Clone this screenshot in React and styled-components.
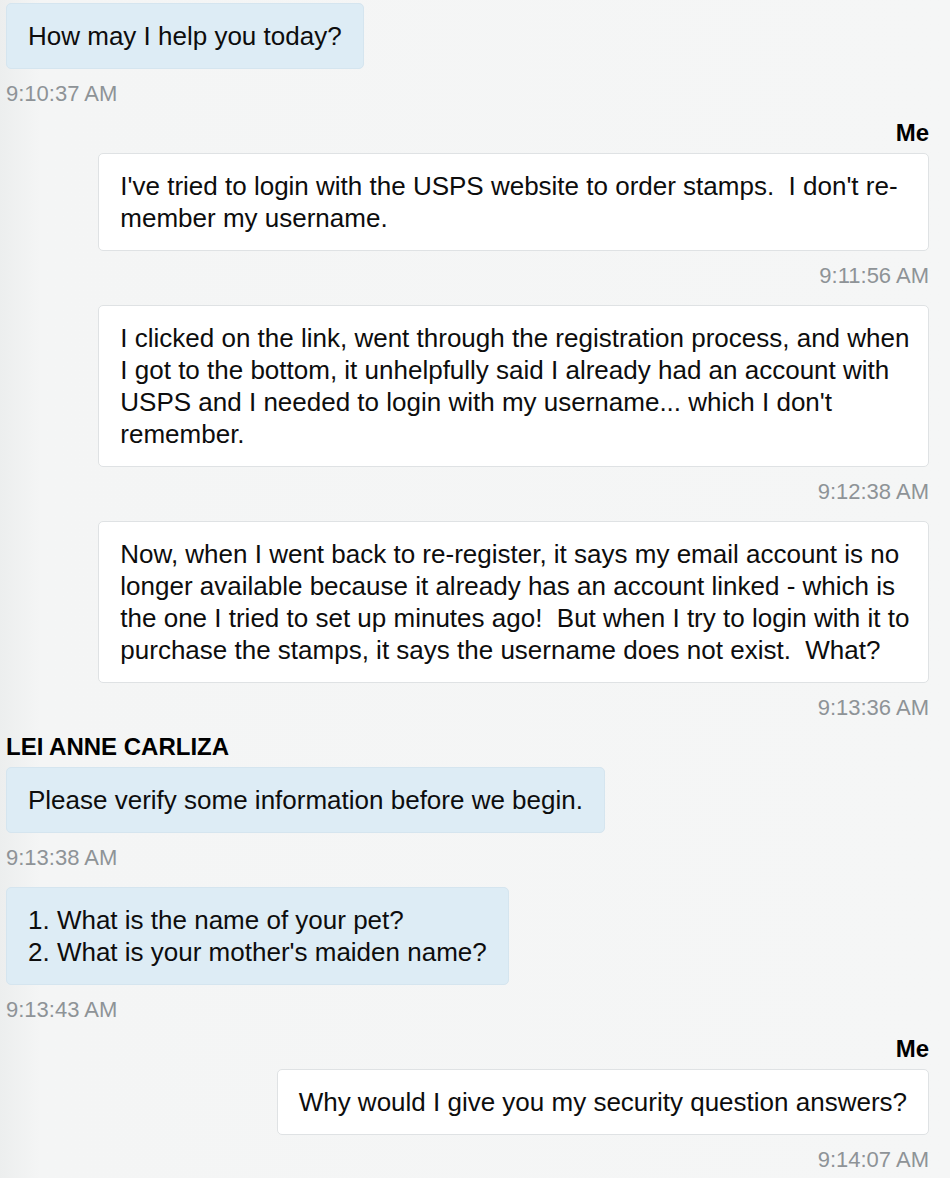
import styled, { createGlobalStyle } from "styled-components";

const GlobalStyle = createGlobalStyle`
  html, body {
    margin: 0;
    padding: 0;
  }
  body {
    background: linear-gradient(to right, #eceeee 0, #f4f5f5 40px, #f5f6f6 100%);
    font-family: "Liberation Sans", Arial, Helvetica, sans-serif;
    color: #111;
  }
`;

const Transcript = styled.div`
  display: flex;
  flex-direction: column;
  gap: 15px;
  padding: 3px 21px 20px 6px;
`;

const Group = styled.section`
  display: flex;
  flex-direction: column;
  align-items: ${(p) => (p.$mine ? "flex-end" : "flex-start")};
`;

const Name = styled.h3`
  margin: 0 0 8px;
  font-size: 24px;
  line-height: 24px;
  font-weight: 700;
  color: #000;
`;

const Messages = styled.div`
  display: flex;
  flex-direction: column;
  gap: 17px;
  width: 100%;
  align-items: ${(p) => (p.$mine ? "flex-end" : "flex-start")};
`;

const Message = styled.div`
  display: flex;
  flex-direction: column;
  align-items: ${(p) => (p.$mine ? "flex-end" : "flex-start")};
  width: 100%;
`;

const Bubble = styled.div`
  box-sizing: border-box;
  width: ${(p) => (p.$full ? "90%" : "auto")};
  padding: 16px 21px;
  border-radius: 5px;
  border: 1px solid ${(p) => (p.$mine ? "#dfe2e4" : "#d5e5ef")};
  background: ${(p) => (p.$mine ? "#ffffff" : "#ddecf5")};
  font-size: 26px;
  line-height: 32px;
  color: #0d0d0d;
  white-space: pre;
`;

const Time = styled.div`
  margin-top: 13px;
  font-size: 22px;
  line-height: 24px;
  color: #8e9397;
`;

const transcript = [
  {
    name: null,
    mine: false,
    messages: [{ text: "How may I help you today?", time: "9:10:37 AM" }],
  },
  {
    name: "Me",
    mine: true,
    messages: [
      {
        text: "I've tried to login with the USPS website to order stamps.  I don't re-\nmember my username.",
        time: "9:11:56 AM",
        full: true,
      },
      {
        text: "I clicked on the link, went through the registration process, and when\nI got to the bottom, it unhelpfully said I already had an account with\nUSPS and I needed to login with my username... which I don't\nremember.",
        time: "9:12:38 AM",
        full: true,
      },
      {
        text: "Now, when I went back to re-register, it says my email account is no\nlonger available because it already has an account linked - which is\nthe one I tried to set up minutes ago!  But when I try to login with it to\npurchase the stamps, it says the username does not exist.  What?",
        time: "9:13:36 AM",
        full: true,
      },
    ],
  },
  {
    name: "LEI ANNE CARLIZA",
    mine: false,
    messages: [
      { text: "Please verify some information before we begin.", time: "9:13:38 AM" },
      {
        text: "1. What is the name of your pet?\n2. What is your mother's maiden name?",
        time: "9:13:43 AM",
      },
    ],
  },
  {
    name: "Me",
    mine: true,
    messages: [
      { text: "Why would I give you my security question answers?", time: "9:14:07 AM" },
    ],
  },
];

const App = () => {
  return (
    <>
      <GlobalStyle />
      <Transcript>
        {transcript.map((group, i) => (
          <Group key={i} $mine={group.mine}>
            {group.name && <Name>{group.name}</Name>}
            <Messages $mine={group.mine}>
              {group.messages.map((msg) => (
                <Message key={msg.time} $mine={group.mine}>
                  <Bubble $mine={group.mine} $full={msg.full}>
                    {msg.text}
                  </Bubble>
                  <Time>{msg.time}</Time>
                </Message>
              ))}
            </Messages>
          </Group>
        ))}
      </Transcript>
    </>
  );
};

export default App;
